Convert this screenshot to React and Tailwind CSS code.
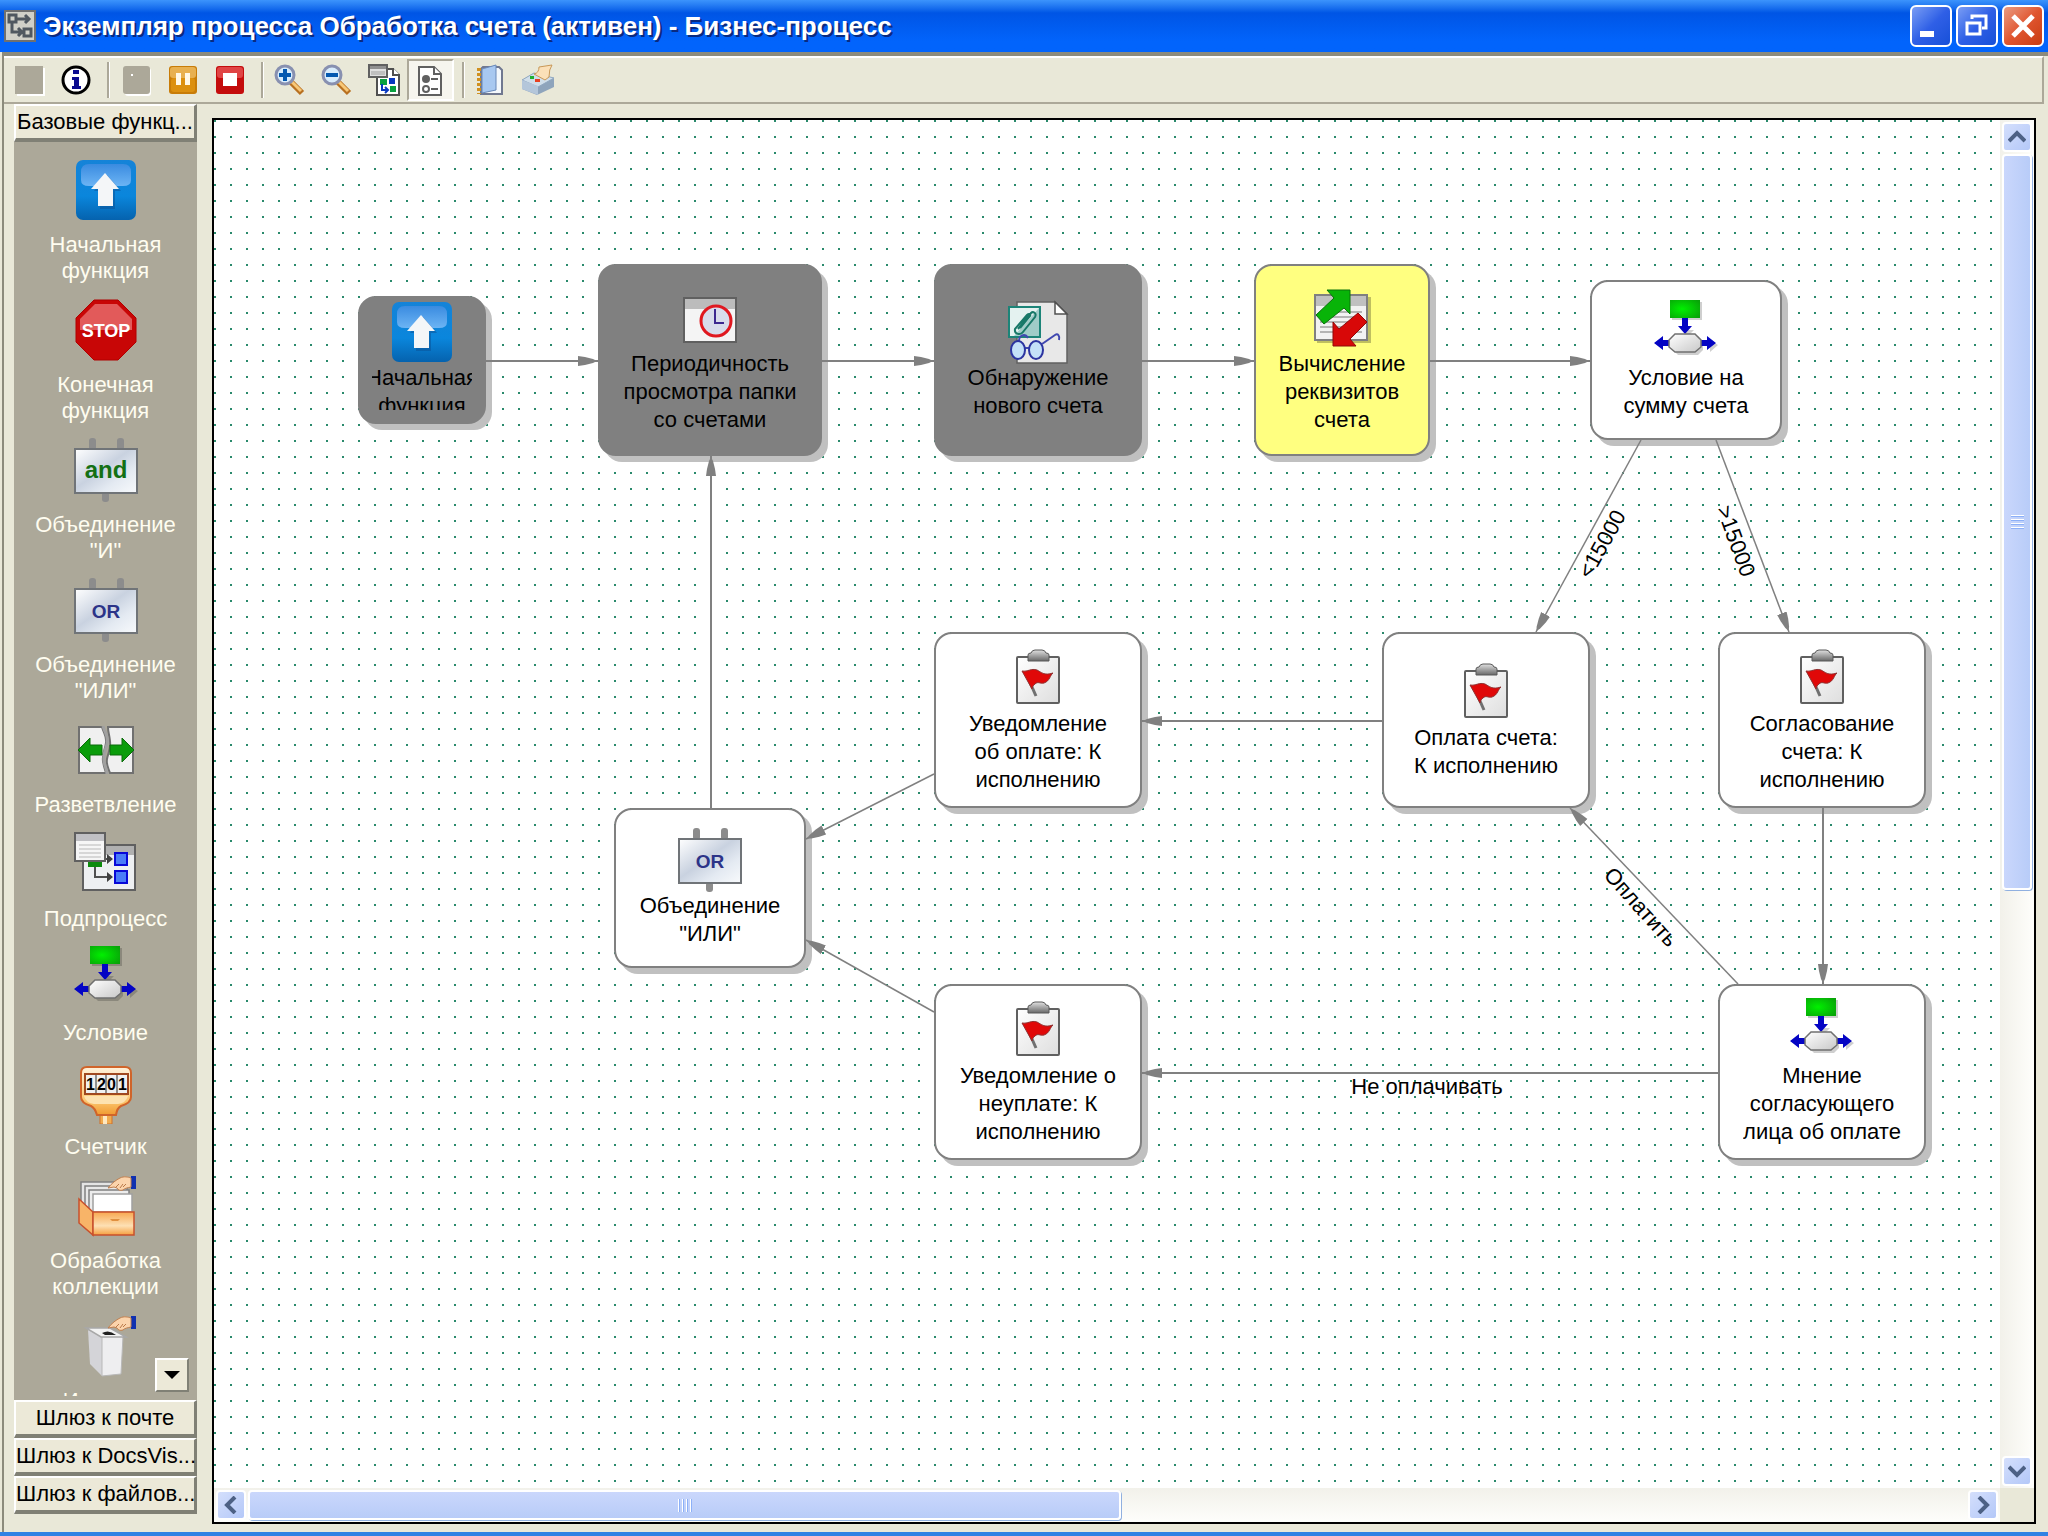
import React from "react";

const StartIcon = () => (
    <svg viewBox="0 0 64 64" className="size-16 shrink-0">
        <defs>
            <linearGradient id="startBg" x1="0" y1="0" x2="0" y2="1">
                <stop offset="0" stopColor="#1583d8" />
                <stop offset="0.6" stopColor="#0a86dc" />
                <stop offset="1" stopColor="#0562ae" />
            </linearGradient>
            <linearGradient id="startGloss" x1="0" y1="0" x2="0" y2="1">
                <stop offset="0" stopColor="#3a8be0" />
                <stop offset="1" stopColor="#6cb4f4" />
            </linearGradient>
        </defs>
        <rect x="2" y="2" width="60" height="60" rx="7" fill="url(#startBg)" />
        <path
            d="M7 14q0-8 8-8h34q8 0 8 8v8q0 6-8 6H15q-8 0-8-6z"
            fill="url(#startGloss)"
        />
        <path
            d="M33 17 47 33h-6v18H26V33h-6z"
            fill="#0a4f94"
            opacity="0.5"
        />
        <path d="M31 15 45 31h-6v17H24V31h-7z" fill="#f4f6f8" />
    </svg>
);

const StopIcon = () => (
    <svg viewBox="0 0 64 64" className="size-16 shrink-0">
        <path
            d="M20 2h24l18 18v24L44 62H20L2 44V20z"
            fill="#c80606"
            stroke="#b00000"
            strokeWidth="1"
        />
        <path d="M21 6h22l15 15v11H6V21z" fill="#e25a5a" />
        <text
            x="32"
            y="39"
            textAnchor="middle"
            fill="#ffffff"
            className="font-['Liberation_Sans',sans-serif] text-[18px] font-bold"
        >
            STOP
        </text>
    </svg>
);

const GateIcon = ({ label, color, size }) => (
    <svg viewBox="0 0 64 64" className="size-16 shrink-0">
        <defs>
            <linearGradient id="gateBg" x1="0" y1="0" x2="1" y2="1">
                <stop offset="0" stopColor="#ffffff" />
                <stop offset="0.45" stopColor="#c9d2e0" />
                <stop offset="0.7" stopColor="#e4eaf2" />
                <stop offset="1" stopColor="#f8fafc" />
            </linearGradient>
        </defs>
        <rect x="15" y="0" width="7" height="12" rx="3" fill="#8c8c8c" />
        <rect x="43" y="0" width="7" height="12" rx="3" fill="#8c8c8c" />
        <rect x="28" y="54" width="7" height="10" rx="3" fill="#8c8c8c" />
        <rect
            x="1"
            y="11"
            width="62"
            height="44"
            fill="url(#gateBg)"
            stroke="#707478"
            strokeWidth="2"
        />
        <text
            x="32"
            y="40"
            textAnchor="middle"
            fill={color}
            className={`font-['Liberation_Sans',sans-serif] font-bold ${size}`}
        >
            {label}
        </text>
    </svg>
);

const AndIcon = () => (
    <GateIcon label="and" color="#147014" size="text-[24px]" />
);
const OrIcon = () => <GateIcon label="OR" color="#2c3488" size="text-[19px]" />;

const ForkIcon = () => (
    <svg viewBox="0 0 64 64" className="size-16 shrink-0">
        <path
            d="M5 9h23c2 7 5 9 4 16s-4 11-3 18 2 8 3 12H5z"
            fill="#f0f0f0"
            stroke="#707070"
            strokeWidth="2"
        />
        <path
            d="M34 9h25v46H36c-2-6-4-8-3-14s4-10 3-18-2-9-2-14z"
            fill="#f0f0f0"
            stroke="#707070"
            strokeWidth="2"
        />
        <path
            d="M29 8c2 8 6 10 4 18s-4 10-3 17 3 8 3 13"
            fill="none"
            stroke="#a0a0a0"
            strokeWidth="3"
        />
        <path
            d="M4 32 16 20v7h12v10H16v7zM60 32 48 20v7H36v10h12v7z"
            fill="#0a9c0a"
            stroke="#0b6a0b"
            strokeWidth="1"
        />
    </svg>
);

const SubprocessIcon = () => (
    <svg viewBox="0 0 64 64" className="size-16 shrink-0">
        <rect
            x="9"
            y="13"
            width="52"
            height="45"
            fill="#eef0f2"
            stroke="#606060"
            strokeWidth="2"
        />
        <path d="M32 14h28v9H32z" fill="#b0b0b0" />
        <path d="M14 29h14v6H14z" fill="#0c8a0c" />
        <path
            d="M21 35v10h12M32 27h4"
            fill="none"
            stroke="#505050"
            strokeWidth="2"
        />
        <path d="M33 22l6 5-6 5zM33 40l6 5-6 5z" fill="#404040" />
        <rect
            x="41"
            y="21"
            width="12"
            height="12"
            fill="#4a7cf8"
            stroke="#0808d8"
            strokeWidth="2"
        />
        <rect
            x="41"
            y="39"
            width="12"
            height="12"
            fill="#4a7cf8"
            stroke="#0808d8"
            strokeWidth="2"
        />
        <rect
            x="1"
            y="1"
            width="30"
            height="28"
            fill="#f6f6f6"
            stroke="#606060"
            strokeWidth="2"
        />
        <path d="M2 2h28v7H2z" fill="#c0c0c4" />
        <path
            d="M5 13h22M5 17h22M5 21h22M5 25h22"
            stroke="#b8b8b8"
            strokeWidth="1"
        />
    </svg>
);

const ConditionIcon = () => (
    <svg viewBox="0 0 64 64" className="size-16 shrink-0">
        <defs>
            <radialGradient id="condGreen" cx="0.4" cy="0.5" r="0.7">
                <stop offset="0" stopColor="#00f000" />
                <stop offset="1" stopColor="#08a408" />
            </radialGradient>
            <linearGradient id="condHex" x1="0" y1="0" x2="1" y2="1">
                <stop offset="0" stopColor="#ffffff" />
                <stop offset="1" stopColor="#c8c8c8" />
            </linearGradient>
        </defs>
        <g fill="#00000030">
            <path d="M18 2h30v18H18z" />
            <path d="M24 36h20l5 5v9l-5 5H24l-5-5z" />
            <path d="M40 30 34 36 28 30z M64 45l-8 7v-12z" />
        </g>
        <path d="M16 0h30v18H16z" fill="url(#condGreen)" />
        <path
            d="M28 18h6v8h4l-7 8-7-8h4zM0 43l9-7v4h7v6H9v4zM62 43l-9-7v4h-7v6h7v4z"
            fill="#0404c4"
        />
        <path
            d="M21 34h20l6 6v7l-6 5H21l-6-5v-7z"
            fill="url(#condHex)"
            stroke="#707070"
            strokeWidth="1.5"
        />
    </svg>
);

const CounterIcon = () => (
    <svg viewBox="0 0 64 64" className="size-16 shrink-0">
        <defs>
            <linearGradient id="counterBg" x1="0" y1="0" x2="0" y2="1">
                <stop offset="0" stopColor="#fff2dc" />
                <stop offset="0.7" stopColor="#fcc670" />
                <stop offset="1" stopColor="#f09a30" />
            </linearGradient>
        </defs>
        <path d="M26 52h12v12H26z" fill="#f0ac50" stroke="#d07028" />
        <path d="M29 54h4v10h-4z" fill="#ffe8c0" />
        <path
            d="M13 7h38q6 0 6 6v24q0 6-10 9-4 2-5 9H23q-2-7-6-9-10-3-10-9V13q0-6 6-6z"
            fill="url(#counterBg)"
            stroke="#d0642a"
            strokeWidth="2"
        />
        <path d="M10 36h44q-2 7-10 8H20q-8-1-10-8z" fill="#fde2b0" />
        <rect x="11" y="14" width="43" height="20" fill="#f0f0f0" stroke="#a04820" strokeWidth="2" />
        <path d="M22 15v18M32 15v18M43 15v18" stroke="#909090" strokeWidth="2" />
        <text
            y="30"
            fill="#000000"
            className="font-['Liberation_Sans',sans-serif] text-[16px] font-bold"
        >
            <tspan x="12">1</tspan>
            <tspan x="23">2</tspan>
            <tspan x="33">0</tspan>
            <tspan x="44">1</tspan>
        </text>
    </svg>
);

const Hand = () => (
    <g>
        <path d="M57 2h5v13h-5z" fill="#1030b0" />
        <path
            d="M34 14c4-5 8-8 12-10 4-2 8-1 11 0v9c-4 1-6 1-8 3-3 1-5 0-6-2l-3-1z"
            fill="#fbd4ac"
            stroke="#c08050"
            strokeWidth="1"
        />
        <path
            d="M42 13l3-3M46 14l3-4M49 13l3-3"
            stroke="#b87848"
            strokeWidth="1"
            fill="none"
        />
    </g>
);

const CollectionIcon = () => (
    <svg viewBox="0 0 64 64" className="size-16 shrink-0">
        <defs>
            <linearGradient id="drawer" x1="0" y1="0" x2="0" y2="1">
                <stop offset="0" stopColor="#f8a850" />
                <stop offset="0.6" stopColor="#fde0b4" />
                <stop offset="1" stopColor="#f6a040" />
            </linearGradient>
        </defs>
        <path d="M7 8h44v26H7z" fill="#e4e4e4" stroke="#808080" strokeWidth="1.5" />
        <path d="M11 12h42v26H11z" fill="#e8e8e8" stroke="#808080" strokeWidth="1.5" />
        <path d="M15 16h40v24H15z" fill="#ececec" stroke="#808080" strokeWidth="1.5" />
        <path d="M19 20h39v18H19z" fill="#ffffff" stroke="#a0a0a0" strokeWidth="1.5" />
        <path
            d="M5 25l14 13v23L5 49z"
            fill="#f8b468"
            stroke="#c8502c"
            strokeWidth="1.5"
        />
        <rect
            x="19"
            y="38"
            width="41"
            height="23"
            fill="url(#drawer)"
            stroke="#c8502c"
            strokeWidth="1.5"
        />
        <path d="M36 45h10l-2 2h-6z" fill="#e09040" />
        <Hand />
    </svg>
);

const BinIcon = () => (
    <svg viewBox="0 0 64 64" className="size-16 shrink-0">
        <path d="M14 16l14 6v40L16 50z" fill="#d4d4d8" />
        <path d="M28 22h21l-2 38-19 2z" fill="#eeeef0" stroke="#b8b8b8" />
        <path
            d="M12 14h24l16 9H27z"
            fill="#f2f2f2"
            stroke="#a8a8a8"
            strokeWidth="1.5"
        />
        <path d="M28 19q7-4 14 2H31z" fill="#202020" />
        <Hand />
    </svg>
);

const TimerIcon = () => (
    <svg viewBox="0 0 64 64" className="size-16 shrink-0">
        <rect
            x="6"
            y="12"
            width="52"
            height="44"
            fill="#f4f4f4"
            stroke="#606060"
            strokeWidth="2"
        />
        <path d="M7 13h50v10H7z" fill="#bcbcbc" />
        <circle
            cx="38"
            cy="35"
            r="15"
            fill="#d8dcec"
            stroke="#e01820"
            strokeWidth="3"
        />
        <path
            d="M37 23v14h9"
            fill="none"
            stroke="#3c2890"
            strokeWidth="2"
        />
    </svg>
);

const DetectIcon = () => (
    <svg viewBox="0 0 64 64" className="size-16 shrink-0">
        <path
            d="M11 2h38l12 12v49H11z"
            fill="#e8e8e8"
            stroke="#606060"
            strokeWidth="1.5"
        />
        <path d="M49 2v12h12z" fill="#ffffff" stroke="#505050" strokeWidth="1.5" />
        <rect
            x="3"
            y="7"
            width="31"
            height="30"
            fill="#e4f2f0"
            stroke="#1c8478"
            strokeWidth="2"
        />
        <path d="M33 8v28H8z" fill="#a0ccc8" />
        <path
            d="M12 29l13-16c2-2 6 0 4 4L17 32c-2 3-9 3-8-3l12-14c2-2 4-1 3 1L14 28"
            fill="none"
            stroke="#187868"
            strokeWidth="2"
        />
        <path
            d="M13 41c0-6 6-8 9-3M36 44L49 35c3-2 5 1 4 5M19 48h4"
            fill="none"
            stroke="#4048b0"
            strokeWidth="2"
        />
        <ellipse cx="12" cy="50" rx="7" ry="9" fill="#c4e0f8" stroke="#2c34a0" strokeWidth="2" />
        <ellipse cx="30" cy="50" rx="7" ry="9" fill="#c4e0f8" stroke="#2c34a0" strokeWidth="2" />
    </svg>
);

const ComputeIcon = () => (
    <svg viewBox="0 0 64 64" className="size-16 shrink-0">
        <path d="M7 11h54v46H7z" fill="#00000040" />
        <rect
            x="5"
            y="9"
            width="52"
            height="45"
            fill="#f2f2f2"
            stroke="#808080"
            strokeWidth="2"
        />
        <path d="M6 10h50v10H6z" fill="#c0c0c0" />
        <path
            d="M10 26h42M10 31h42M10 36h42M10 41h42M10 46h42"
            stroke="#a0a0a0"
            strokeWidth="1.5"
        />
        <path
            d="M17 4h23v24l-6-6-20 16-8-9 18-17z"
            fill="#08b408"
            stroke="#0a720a"
            strokeWidth="1"
        />
        <path
            d="M23 36l6 7 19-16 9 9-17 17 6 7H23z"
            fill="#d80808"
            stroke="#900808"
            strokeWidth="1"
        />
    </svg>
);

const TaskIcon = () => (
    <svg viewBox="0 0 64 64" className="size-16 shrink-0">
        <defs>
            <linearGradient id="board" x1="0" y1="0" x2="1" y2="1">
                <stop offset="0" stopColor="#ffffff" />
                <stop offset="1" stopColor="#dedede" />
            </linearGradient>
            <linearGradient id="clamp" x1="0" y1="0" x2="0" y2="1">
                <stop offset="0" stopColor="#e0e0e0" />
                <stop offset="1" stopColor="#686868" />
            </linearGradient>
        </defs>
        <rect
            x="11"
            y="11"
            width="42"
            height="46"
            rx="1"
            fill="url(#board)"
            stroke="#606060"
            strokeWidth="2"
        />
        <path
            d="M22 15v-6q0-2 3-2 1-3 4-3h7q3 0 4 3 3 0 3 2v6z"
            fill="url(#clamp)"
            stroke="#585858"
            strokeWidth="1"
        />
        <path d="M22 32l8 18" stroke="#707070" strokeWidth="3" />
        <path
            d="M16 25c6 1 9-3 15-1 4 2 7 6 16 3-3 2-3 8-9 10-4 1-6-2-9 1-2 1-3 4-3 5z"
            fill="#e00808"
            stroke="#903030"
            strokeWidth="1"
        />
    </svg>
);

const paletteItems = [
    { icon: StartIcon, lines: ["Начальная", "функция"] },
    { icon: StopIcon, lines: ["Конечная", "функция"] },
    { icon: AndIcon, lines: ["Объединение", '"И"'] },
    { icon: OrIcon, lines: ["Объединение", '"ИЛИ"'] },
    { icon: ForkIcon, lines: ["Разветвление"] },
    { icon: SubprocessIcon, lines: ["Подпроцесс"] },
    { icon: ConditionIcon, lines: ["Условие"] },
    { icon: CounterIcon, lines: ["Счетчик"] },
    { icon: CollectionIcon, lines: ["Обработка", "коллекции"] },
    { icon: BinIcon, lines: ["Изъятие"] },
];

const gateways = ["Шлюз к почте", "Шлюз к DocsVis...", "Шлюз к файлов..."];

const nodes = [
    {
        icon: StartIcon,
        lines: ["Начальная", "функция"],
        box: "left-[144px] top-[176px] h-[128px] w-[128px] px-3 pt-[2px] pb-3 bg-[#808080]",
    },
    {
        icon: TimerIcon,
        lines: ["Периодичность", "просмотра папки", "со счетами"],
        box: "left-[384px] top-[144px] h-[192px] w-[224px] bg-[#808080]",
    },
    {
        icon: DetectIcon,
        lines: ["Обнаружение", "нового счета"],
        box: "left-[720px] top-[144px] h-[192px] w-[208px] bg-[#808080]",
    },
    {
        icon: ComputeIcon,
        lines: ["Вычисление", "реквизитов", "счета"],
        box: "left-[1040px] top-[144px] h-[192px] w-[176px] bg-[#ffff80]",
    },
    {
        icon: ConditionIcon,
        lines: ["Условие на", "сумму счета"],
        box: "left-[1376px] top-[160px] h-[160px] w-[192px] bg-white",
    },
    {
        icon: TaskIcon,
        lines: ["Уведомление", "об оплате: К", "исполнению"],
        box: "left-[720px] top-[512px] h-[176px] w-[208px] bg-white",
    },
    {
        icon: TaskIcon,
        lines: ["Оплата счета:", "К исполнению"],
        box: "left-[1168px] top-[512px] h-[176px] w-[208px] bg-white",
    },
    {
        icon: TaskIcon,
        lines: ["Согласование", "счета: К", "исполнению"],
        box: "left-[1504px] top-[512px] h-[176px] w-[208px] bg-white",
    },
    {
        icon: OrIcon,
        lines: ["Объединение", '"ИЛИ"'],
        box: "left-[400px] top-[688px] h-[160px] w-[192px] bg-white",
    },
    {
        icon: TaskIcon,
        lines: ["Уведомление о", "неуплате: К", "исполнению"],
        box: "left-[720px] top-[864px] h-[176px] w-[208px] bg-white",
    },
    {
        icon: ConditionIcon,
        lines: ["Мнение", "согласующего", "лица об оплате"],
        box: "left-[1504px] top-[864px] h-[176px] w-[208px] bg-white",
    },
];

const edges = [
    [272, 241, 384, 241],
    [608, 241, 720, 241],
    [928, 241, 1040, 241],
    [1216, 241, 1376, 241],
    [497, 688, 497, 336],
    [1427, 320, 1322, 512],
    [1502, 320, 1575, 512],
    [1168, 601, 928, 601],
    [720, 654, 592, 719],
    [720, 892, 592, 820],
    [1609, 688, 1609, 864],
    [1524, 864, 1356, 688],
    [1504, 953, 928, 953],
];

const edgeLabels = [
    { text: "<15000", x: 1388, y: 424, angle: -61 },
    { text: ">15000", x: 1522, y: 421, angle: 70 },
    { text: "Оплатить", x: 1427, y: 787, angle: 48 },
    { text: "Не оплачивать", x: 1213, y: 966, angle: 0 },
];

const Separator = () => (
    <div className="mr-[2px] ml-2 h-9 w-[3px] border-l-2 border-r border-l-[#aca899] border-r-white" />
);

const ToolButton = ({ label, active, children }) => (
    <button
        aria-label={label}
        className={
            active
                ? "flex h-[42px] w-[47px] items-center justify-center border-2 border-t-[#aca899] border-l-[#aca899] border-r-white border-b-white bg-[#f6f5ee]"
                : "flex h-[42px] w-[47px] items-center justify-center"
        }
    >
        {children}
    </button>
);

const Toolbar = () => (
    <div className="mr-1 flex h-12 shrink-0 items-center border-t-2 border-r-2 border-b-2 border-t-white border-r-[#aca899] border-b-[#aca899] pl-px">
        <ToolButton label="Сохранить">
            <svg viewBox="0 0 32 32" className="size-8">
                <path d="M4 4h28v28H4z" fill="#ffffff" />
                <path d="M2 2h28v28H2z" fill="#aca899" />
            </svg>
        </ToolButton>
        <ToolButton label="Информация">
            <svg viewBox="0 0 32 32" className="size-8">
                <circle cx="16" cy="16" r="13" fill="#fff" stroke="#000" strokeWidth="3" />
                <path d="M13 6h6v4h-6zM12 13h7v9h2v3h-9v-3h2v-6h-2z" fill="#0c0c90" />
            </svg>
        </ToolButton>
        <Separator />
        <ToolButton label="Запустить">
            <svg viewBox="0 0 32 32" className="size-8">
                <rect x="5" y="4" width="26" height="28" rx="3" fill="#fff" />
                <rect x="3" y="2" width="27" height="28" rx="3" fill="#aca899" />
                <path d="M11 10h2v2h-2z" fill="#fff" />
            </svg>
        </ToolButton>
        <ToolButton label="Приостановить">
            <svg viewBox="0 0 32 32" className="size-8">
                <rect x="2" y="2" width="28" height="28" rx="3" fill="#c87c08" />
                <rect x="3" y="3" width="26" height="11" rx="3" fill="#e8b050" />
                <rect x="4" y="14" width="24" height="14" rx="3" fill="#dc9010" />
                <path d="M9 9h5v12H9zM18 9h5v12h-5z" fill="#fff8e8" />
            </svg>
        </ToolButton>
        <ToolButton label="Остановить">
            <svg viewBox="0 0 32 32" className="size-8">
                <rect x="2" y="2" width="28" height="28" rx="3" fill="#c40c0c" />
                <rect x="3" y="3" width="26" height="11" rx="3" fill="#e04444" />
                <path d="M9 9h14v13H9z" fill="#ffffff" />
            </svg>
        </ToolButton>
        <Separator />
        <ToolButton label="Увеличить">
            <svg viewBox="0 0 32 32" className="size-8">
                <path d="M17 18l11 11" stroke="#b87020" strokeWidth="6" />
                <path d="M17 17l10 10" stroke="#f8c878" strokeWidth="3" />
                <circle cx="11" cy="11" r="9" fill="#d8ecfc" stroke="#8890b0" strokeWidth="3" />
                <path d="M9 5h4v4h4v4h-4v4H9v-4H5V9h4z" fill="#0458b0" />
            </svg>
        </ToolButton>
        <ToolButton label="Уменьшить">
            <svg viewBox="0 0 32 32" className="size-8">
                <path d="M17 18l11 11" stroke="#b87020" strokeWidth="6" />
                <path d="M17 17l10 10" stroke="#f8c878" strokeWidth="3" />
                <circle cx="11" cy="11" r="9" fill="#d8ecfc" stroke="#8890b0" strokeWidth="3" />
                <path d="M5 9h12v4H5z" fill="#0458b0" />
            </svg>
        </ToolButton>
        <ToolButton label="Подпроцесс">
            <svg viewBox="0 0 32 32" className="size-8">
                <path d="M9 5h16l6 6v20H9z" fill="#fff" stroke="#505050" strokeWidth="2" />
                <path d="M25 4v7h7" fill="#fff" stroke="#505050" strokeWidth="2" />
                <path d="M12 15h7v6h-7zM22 22h6v6h-6z" fill="#08a040" />
                <path d="M21 14h6v6h-6z" fill="#0838c0" />
                <path d="M14 20v6h6m-3-3 3 3-3 3" fill="none" stroke="#0838c0" strokeWidth="2" />
                <path d="M1 1h18v12H1z" fill="#e0e0e0" stroke="#606060" strokeWidth="2" />
                <path d="M2 2h16v3H2z" fill="#909090" />
                <path d="M3 8h14M3 10h14" stroke="#a0a0a0" />
            </svg>
        </ToolButton>
        <ToolButton label="Свойства" active>
            <svg viewBox="0 -2 32 32" className="size-8">
                <path d="M4 1h15l7 7v21H4z" fill="#fff" stroke="#606060" strokeWidth="2" />
                <path d="M19 1v7h7" fill="#fff" stroke="#606060" strokeWidth="2" />
                <circle cx="11" cy="13" r="4" fill="#606060" />
                <circle cx="11" cy="23" r="3" fill="#fff" stroke="#606060" strokeWidth="2" />
                <path d="M16 13h7M16 23h7" stroke="#606060" strokeWidth="2" />
            </svg>
        </ToolButton>
        <Separator />
        <ToolButton label="Журнал">
            <svg viewBox="0 0 32 32" className="size-8">
                <path d="M8 3h16l3 3v24H6V5z" fill="#f4f8fc" stroke="#707890" strokeWidth="2" />
                <path d="M7 5l14-4v25L7 29z" fill="#a8c8f0" stroke="#6888b8" />
                <path d="M4 4v26" stroke="#d09020" strokeWidth="4" strokeDasharray="3 2" />
            </svg>
        </ToolButton>
        <ToolButton label="Печать">
            <svg viewBox="0 0 32 32" className="size-8">
                <path d="M0 16l12-7 20 5v9L15 31 0 25z" fill="#8ea4bc" />
                <path d="M0 16l12-7 20 5-16 9z" fill="#d0deea" stroke="#90a8c0" />
                <path d="M16 22v9L0 25v-9z" fill="#b4c6da" />
                <path d="M12 10q5-1 5-7l13-2q-3 4-3 12l-4 3z" fill="#fbe0b8" stroke="#c89858" />
                <path d="M8 12h4v3H8z" fill="#20b030" />
                <path d="M13 15h5v3h-5z" fill="#e84020" />
            </svg>
        </ToolButton>
    </div>
);

const ProcessGlyph = () => (
    <svg viewBox="0 0 32 32" className="size-8">
        <path d="M0 0h32v32H0z" fill="#707070" />
        <path d="M2 2h28v28H2z" fill="#d0d0c8" />
        <path
            d="M5 5h7v7H5zM20 19h7v7h-7zM12 9h13M8 12v10h9M21 5l4 4-4 4M14 18l4 4-4 4"
            fill="none"
            stroke="#505860"
            strokeWidth="3"
        />
    </svg>
);

const WindowButton = ({ label, close, children }) => (
    <button
        aria-label={label}
        className={
            close
                ? "flex size-[42px] items-center justify-center rounded-md border-2 border-white bg-linear-to-br from-[#e89a80] via-[#e0552f] to-[#c83c10]"
                : "flex size-[42px] items-center justify-center rounded-md border-2 border-white bg-linear-to-br from-[#7a9cf4] via-[#2f5fe6] to-[#1650d8]"
        }
    >
        <svg viewBox="0 0 38 38" className="size-full" fill="none" stroke="#fff">
            {children}
        </svg>
    </button>
);

const TitleBar = () => (
    <header className="flex h-[52px] shrink-0 items-center gap-1 bg-linear-to-b from-[#3c94fc] from-0% via-[#0055e5] via-25% to-[#0264fc] to-80% pr-1 pl-1">
        <ProcessGlyph />
        <h1 className="ml-[3px] grow font-['Liberation_Sans',sans-serif] text-[26px] leading-8 font-bold whitespace-nowrap text-white [text-shadow:2px_2px_0_#0a2a80]">
            Экземпляр процесса Обработка счета (активен) - Бизнес-процесс
        </h1>
        <WindowButton label="Свернуть">
            <path d="M8 27h14" strokeWidth="6" />
        </WindowButton>
        <WindowButton label="Восстановить">
            <path d="M14 12V9h14v12h-4" strokeWidth="3" />
            <path d="M9 16h13v11H9zM8 16h15" strokeWidth="3" />
        </WindowButton>
        <WindowButton label="Закрыть" close>
            <path d="M9 9l20 20M29 9L9 29" strokeWidth="5" />
        </WindowButton>
    </header>
);

const raised =
    "border-t-2 border-l-2 border-r-3 border-b-4 border-t-white border-l-white border-r-[#808075] border-b-[#808075]";

const Palette = () => (
    <aside className="mb-[18px] flex w-[183px] shrink-0 flex-col bg-[#aca899]">
        <button
            className={`h-[38px] shrink-0 bg-[#ece9d8] text-center whitespace-nowrap ${raised}`}
        >
            Базовые функц...
        </button>
        <div className="relative mb-1 min-h-0 grow basis-0 overflow-hidden pt-4">
            {paletteItems.map(({ icon: Icon, lines }, i) => (
                <button
                    key={i}
                    className="mb-[14px] flex w-full flex-col items-center text-[#fffdf0]"
                >
                    <Icon />
                    <span className="mt-[10px] flex flex-col leading-[26px]">
                        {lines.map((line) => (
                            <span key={line}>{line}</span>
                        ))}
                    </span>
                </button>
            ))}
            <button
                aria-label="Прокрутить список вниз"
                className="absolute right-2 bottom-1 flex size-[34px] items-center justify-center border-2 border-t-white border-l-white border-r-[#808075] border-b-[#808075] bg-[#ece9d8]"
            >
                <svg viewBox="0 0 16 8" className="h-2 w-4">
                    <path d="M0 0h16L8 8z" fill="#000" />
                </svg>
            </button>
        </div>
        {gateways.map((name) => (
            <button
                key={name}
                className={`h-[38px] shrink-0 bg-[#ece9d8] text-center whitespace-nowrap ${raised}`}
            >
                {name}
            </button>
        ))}
    </aside>
);

const Node = ({ icon: Icon, lines, box }) => (
    <div
        className={`absolute flex items-center justify-center rounded-[18px] border-2 border-[#808080] shadow-[6px_6px_0_#c0c0c0] ${box}`}
    >
        <div className="flex max-h-full max-w-full flex-col items-center overflow-hidden">
            <Icon />
            {lines.map((line) => (
                <span key={line} className="leading-7 whitespace-nowrap">
                    {line}
                </span>
            ))}
        </div>
    </div>
);

const Diagram = () => (
    <main className="relative min-w-0 overflow-hidden bg-white">
        <svg className="absolute inset-0 size-full">
            <defs>
                <pattern
                    id="dots"
                    width="16"
                    height="16"
                    patternUnits="userSpaceOnUse"
                >
                    <rect width="2" height="2" fill="#2a8a6c" />
                </pattern>
            </defs>
            <rect width="100%" height="100%" fill="url(#dots)" />
        </svg>
        {nodes.map((node, i) => (
            <Node key={i} {...node} />
        ))}
        <svg className="pointer-events-none absolute inset-0 size-full">
            <defs>
                <marker
                    id="arrow"
                    markerUnits="userSpaceOnUse"
                    markerWidth="20"
                    markerHeight="12"
                    refX="20"
                    refY="6"
                    orient="auto"
                >
                    <path d="M0 1l7 1 8 2 4 2-4 2-8 2-7 1z" fill="#808080" />
                </marker>
            </defs>
            {edges.map(([x1, y1, x2, y2], i) => (
                <line
                    key={i}
                    x1={x1}
                    y1={y1}
                    x2={x2}
                    y2={y2}
                    stroke="#808080"
                    strokeWidth={x1 === x2 || y1 === y2 ? 2 : 1.5}
                    markerEnd="url(#arrow)"
                />
            ))}
            {edgeLabels.map(({ text, x, y, angle }) => (
                <text
                    key={text}
                    x={x}
                    y={y}
                    textAnchor="middle"
                    dominantBaseline="central"
                    transform={`rotate(${angle} ${x} ${y})`}
                    fill="#000"
                >
                    {text}
                </text>
            ))}
        </svg>
    </main>
);

const ScrollArrow = ({ label, d }) => (
    <button
        aria-label={label}
        className="m-[2px] flex size-[30px] shrink-0 items-center justify-center rounded-sm border-2 border-white bg-linear-to-br from-[#d4dffc] to-[#b4c8f8]"
    >
        <svg viewBox="0 0 18 18" className="size-[18px]">
            <path d={d} fill="none" stroke="#4d6185" strokeWidth="4" />
        </svg>
    </button>
);

const VerticalScrollbar = () => (
    <div className="flex flex-col bg-linear-to-r from-[#f2f1ea] to-[#fefefb]">
        <ScrollArrow label="Вверх" d="M1 13l8-8 8 8" />
        <div className="flex min-h-0 grow flex-col">
            <div className="mx-[2px] flex basis-[736px] items-center justify-center rounded-sm border-2 border-white bg-linear-to-r from-[#cad7fc] to-[#b8ccf8] shadow-[1px_1px_0_#90b0e0]">
                <div className="flex flex-col gap-[2px]">
                    {[0, 1, 2, 3].map((n) => (
                        <div
                            key={n}
                            className="h-[2px] w-[13px] border-t border-b border-t-white border-b-[#8cb0f8]"
                        />
                    ))}
                </div>
            </div>
        </div>
        <ScrollArrow label="Вниз" d="M1 5l8 8 8-8" />
    </div>
);

const HorizontalScrollbar = () => (
    <div className="flex bg-linear-to-b from-[#f2f1ea] to-[#fefefb]">
        <ScrollArrow label="Влево" d="M13 1L5 9l8 8" />
        <div className="flex min-w-0 grow">
            <div className="my-[2px] flex basis-[873px] items-center justify-center rounded-sm border-2 border-white bg-linear-to-b from-[#cad7fc] to-[#b8ccf8] shadow-[1px_1px_0_#90b0e0]">
                <div className="flex gap-[2px]">
                    {[0, 1, 2, 3].map((n) => (
                        <div
                            key={n}
                            className="h-[13px] w-[2px] border-r border-l border-l-white border-r-[#8cb0f8]"
                        />
                    ))}
                </div>
            </div>
        </div>
        <ScrollArrow label="Вправо" d="M5 1l8 8-8 8" />
    </div>
);

const App = () => {
    return (
        <div className="flex h-screen flex-col overflow-hidden border-b-4 border-[#2f82e4] bg-[#e9e8d8] font-['Liberation_Sans',sans-serif] text-[22px] leading-7 text-black">
            <TitleBar />
            <div className="ml-[2px] flex min-h-0 grow flex-col border-t-4 border-l-2 border-[#8c8b7c]">
                <Toolbar />
                <div className="flex min-h-0 grow gap-[15px] pl-[10px]">
                    <Palette />
                    <div className="mt-[14px] mr-3 mb-2 grid min-w-0 grow grid-cols-[minmax(0,1fr)_34px] grid-rows-[minmax(0,1fr)_34px] border-2 border-black">
                        <Diagram />
                        <VerticalScrollbar />
                        <HorizontalScrollbar />
                    </div>
                </div>
            </div>
        </div>
    );
};

export default App;
